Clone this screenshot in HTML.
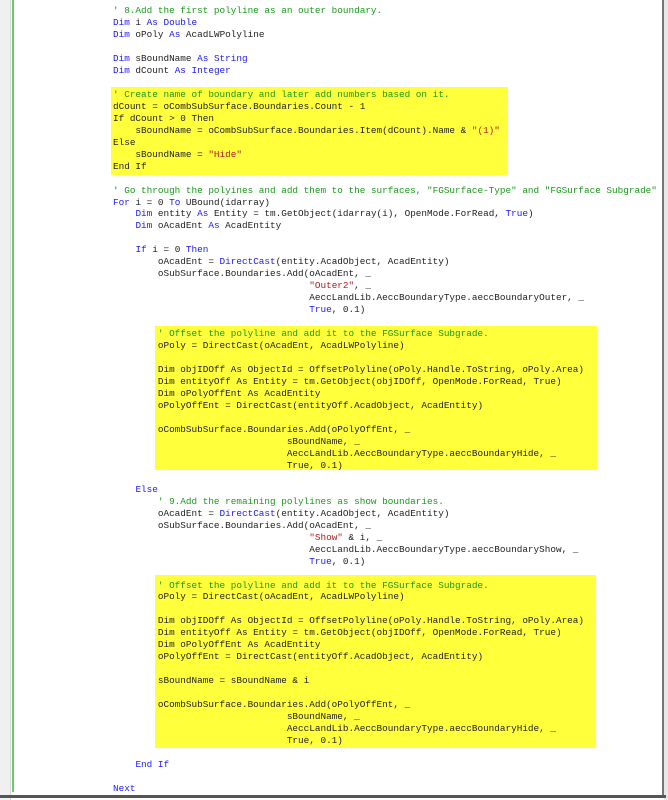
<!DOCTYPE html>
<html><head><style>
html,body{margin:0;padding:0;width:668px;height:800px;overflow:hidden;background:#fff;position:relative}
.strip{position:absolute;left:0;top:0;width:10px;height:800px;background:#f0f0f0;border-right:1px solid #d8d8d8}
.green{position:absolute;left:12px;top:0;width:2px;height:792px;background:#66cc66}
.rb{position:absolute;left:662px;top:0;width:2px;height:797px;background:#777}
.rb2{position:absolute;left:664px;top:0;width:4px;height:800px;background:#e8e8e8}
.bb{position:absolute;left:0;top:795px;width:666px;height:3px;background:#555}
.y{position:absolute;background:#ffff3c}
pre{position:absolute;left:113px;top:5px;margin:0;font-family:"Liberation Mono",monospace;font-size:9.35px;line-height:11.97px;color:#222}
.k{color:#1a1aff}.c{color:#1a9a1a}.s{color:#b02020}
</style></head><body>
<div class="strip"></div><div class="green"></div><div class="rb2"></div><div class="rb"></div><div class="bb"></div>
<div class="y" style="left:111px;top:87px;width:397px;height:88px"></div>
<div class="y" style="left:155px;top:326px;width:442px;height:144px"></div>
<div class="y" style="left:155px;top:575px;width:441px;height:173px"></div>
<pre><span class="c">' 8.Add the first polyline as an outer boundary.</span>
<span class="k">Dim</span> i <span class="k">As</span> <span class="k">Double</span>
<span class="k">Dim</span> oPoly <span class="k">As</span> AcadLWPolyline

<span class="k">Dim</span> sBoundName <span class="k">As</span> <span class="k">String</span>
<span class="k">Dim</span> dCount <span class="k">As</span> <span class="k">Integer</span>

<span class="c">' Create name of boundary and later add numbers based on it.</span>
dCount = oCombSubSurface.Boundaries.Count - 1
If dCount &gt; 0 Then
    sBoundName = oCombSubSurface.Boundaries.Item(dCount).Name &amp; <span class="s">"(1)"</span>
Else
    sBoundName = <span class="s">"Hide"</span>
End If

<span class="c">' Go through the polyines and add them to the surfaces, "FGSurface-Type" and "FGSurface Subgrade"</span>
<span class="k">For</span> i = 0 <span class="k">To</span> UBound(idarray)
    <span class="k">Dim</span> entity <span class="k">As</span> Entity = tm.GetObject(idarray(i), OpenMode.ForRead, <span class="k">True</span>)
    <span class="k">Dim</span> oAcadEnt <span class="k">As</span> AcadEntity

    <span class="k">If</span> i = 0 <span class="k">Then</span>
        oAcadEnt = <span class="k">DirectCast</span>(entity.AcadObject, AcadEntity)
        oSubSurface.Boundaries.Add(oAcadEnt, _
                                   <span class="s">"Outer2"</span>, _
                                   AeccLandLib.AeccBoundaryType.aeccBoundaryOuter, _
                                   <span class="k">True</span>, 0.1)

        <span class="c">' Offset the polyline and add it to the FGSurface Subgrade.</span>
        oPoly = DirectCast(oAcadEnt, AcadLWPolyline)

        Dim objIDOff As ObjectId = OffsetPolyline(oPoly.Handle.ToString, oPoly.Area)
        Dim entityOff As Entity = tm.GetObject(objIDOff, OpenMode.ForRead, True)
        Dim oPolyOffEnt As AcadEntity
        oPolyOffEnt = DirectCast(entityOff.AcadObject, AcadEntity)

        oCombSubSurface.Boundaries.Add(oPolyOffEnt, _
                               sBoundName, _
                               AeccLandLib.AeccBoundaryType.aeccBoundaryHide, _
                               True, 0.1)

    <span class="k">Else</span>
        <span class="c">' 9.Add the remaining polylines as show boundaries.</span>
        oAcadEnt = <span class="k">DirectCast</span>(entity.AcadObject, AcadEntity)
        oSubSurface.Boundaries.Add(oAcadEnt, _
                                   <span class="s">"Show"</span> &amp; i, _
                                   AeccLandLib.AeccBoundaryType.aeccBoundaryShow, _
                                   <span class="k">True</span>, 0.1)

        <span class="c">' Offset the polyline and add it to the FGSurface Subgrade.</span>
        oPoly = DirectCast(oAcadEnt, AcadLWPolyline)

        Dim objIDOff As ObjectId = OffsetPolyline(oPoly.Handle.ToString, oPoly.Area)
        Dim entityOff As Entity = tm.GetObject(objIDOff, OpenMode.ForRead, True)
        Dim oPolyOffEnt As AcadEntity
        oPolyOffEnt = DirectCast(entityOff.AcadObject, AcadEntity)

        sBoundName = sBoundName &amp; i

        oCombSubSurface.Boundaries.Add(oPolyOffEnt, _
                               sBoundName, _
                               AeccLandLib.AeccBoundaryType.aeccBoundaryHide, _
                               True, 0.1)

    <span class="k">End If</span>

<span class="k">Next</span></pre>
</body></html>
